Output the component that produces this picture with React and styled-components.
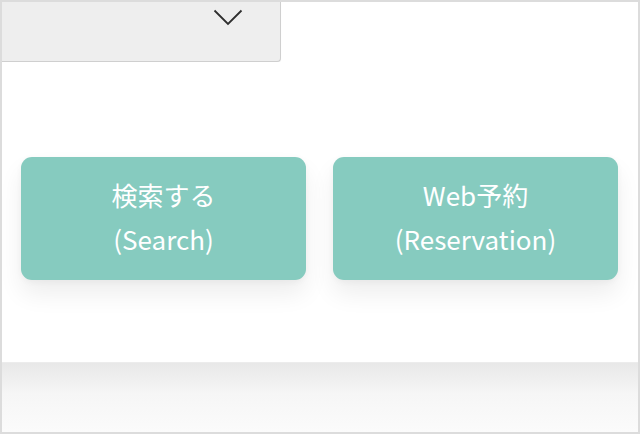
import React from "react";
import styled, { createGlobalStyle } from "styled-components";

const Global = createGlobalStyle`
  html, body { margin: 0; padding: 0; background: #fff; }
  body { font-family: "Noto Sans CJK JP", "Noto Sans", sans-serif; }
`;

const Frame = styled.div`
  width: 640px;
  height: 434px;
  box-sizing: border-box;
  border: 2px solid #dcdcdc;
  display: flex;
  flex-direction: column;
  overflow: hidden;
  background: #fff;
`;

const Top = styled.div`
  display: flex;
  margin-top: -2px;
  margin-left: -2px;
`;

const Select = styled.div`
  width: 281px;
  height: 62px;
  box-sizing: border-box;
  background: #eeeeee;
  border: 1px solid #cfcfcf;
  border-top: none;
  border-radius: 0 0 4px 0;
  box-shadow: 0 1px 1px rgba(0, 0, 0, 0.06);
  display: flex;
  justify-content: flex-end;
  padding-right: 37px;
  padding-top: 9px;
`;

const Main = styled.div`
  flex: 0 0 300px;
  display: flex;
  gap: 27px;
  padding: 95px 20px 0 19px;
  box-sizing: border-box;
  background: #fff;
`;

const Button = styled.button`
  flex: 1;
  height: 123px;
  border: none;
  border-radius: 11px;
  background: #86cbbf;
  color: #fff;
  font-family: "Noto Sans CJK JP", "Noto Sans", sans-serif;
  font-size: 26px;
  line-height: 44px;
  padding: 0 0 4px;
  display: flex;
  flex-direction: column;
  align-items: center;
  justify-content: center;
  box-shadow: 0 14px 24px rgba(0, 0, 0, 0.07), 0 2px 6px rgba(0, 0, 0, 0.04);
  cursor: pointer;
`;

const Line = styled.span`
  display: block;
`;

const Footer = styled.div`
  flex: 1;
  background: linear-gradient(#e8e8e8 0%, #f6f6f6 45%, #fbfbfb 100%);
  border-top: 1px solid #ececec;
`;

const Chevron = () => (
  <svg width="30" height="18" viewBox="0 0 30 18">
    <path d="M1.5 1.5 L15 15 L28.5 1.5" fill="none" stroke="#2e2e2e" strokeWidth="1.8" />
  </svg>
);

export default function App() {
  return (
    <>
      <Global />
      <Frame>
        <Top>
          <Select>
            <Chevron />
          </Select>
        </Top>
        <Main>
          <Button>
            <Line>検索する</Line>
            <Line>(Search)</Line>
          </Button>
          <Button>
            <Line>Web予約</Line>
            <Line>(Reservation)</Line>
          </Button>
        </Main>
        <Footer />
      </Frame>
    </>
  );
}
